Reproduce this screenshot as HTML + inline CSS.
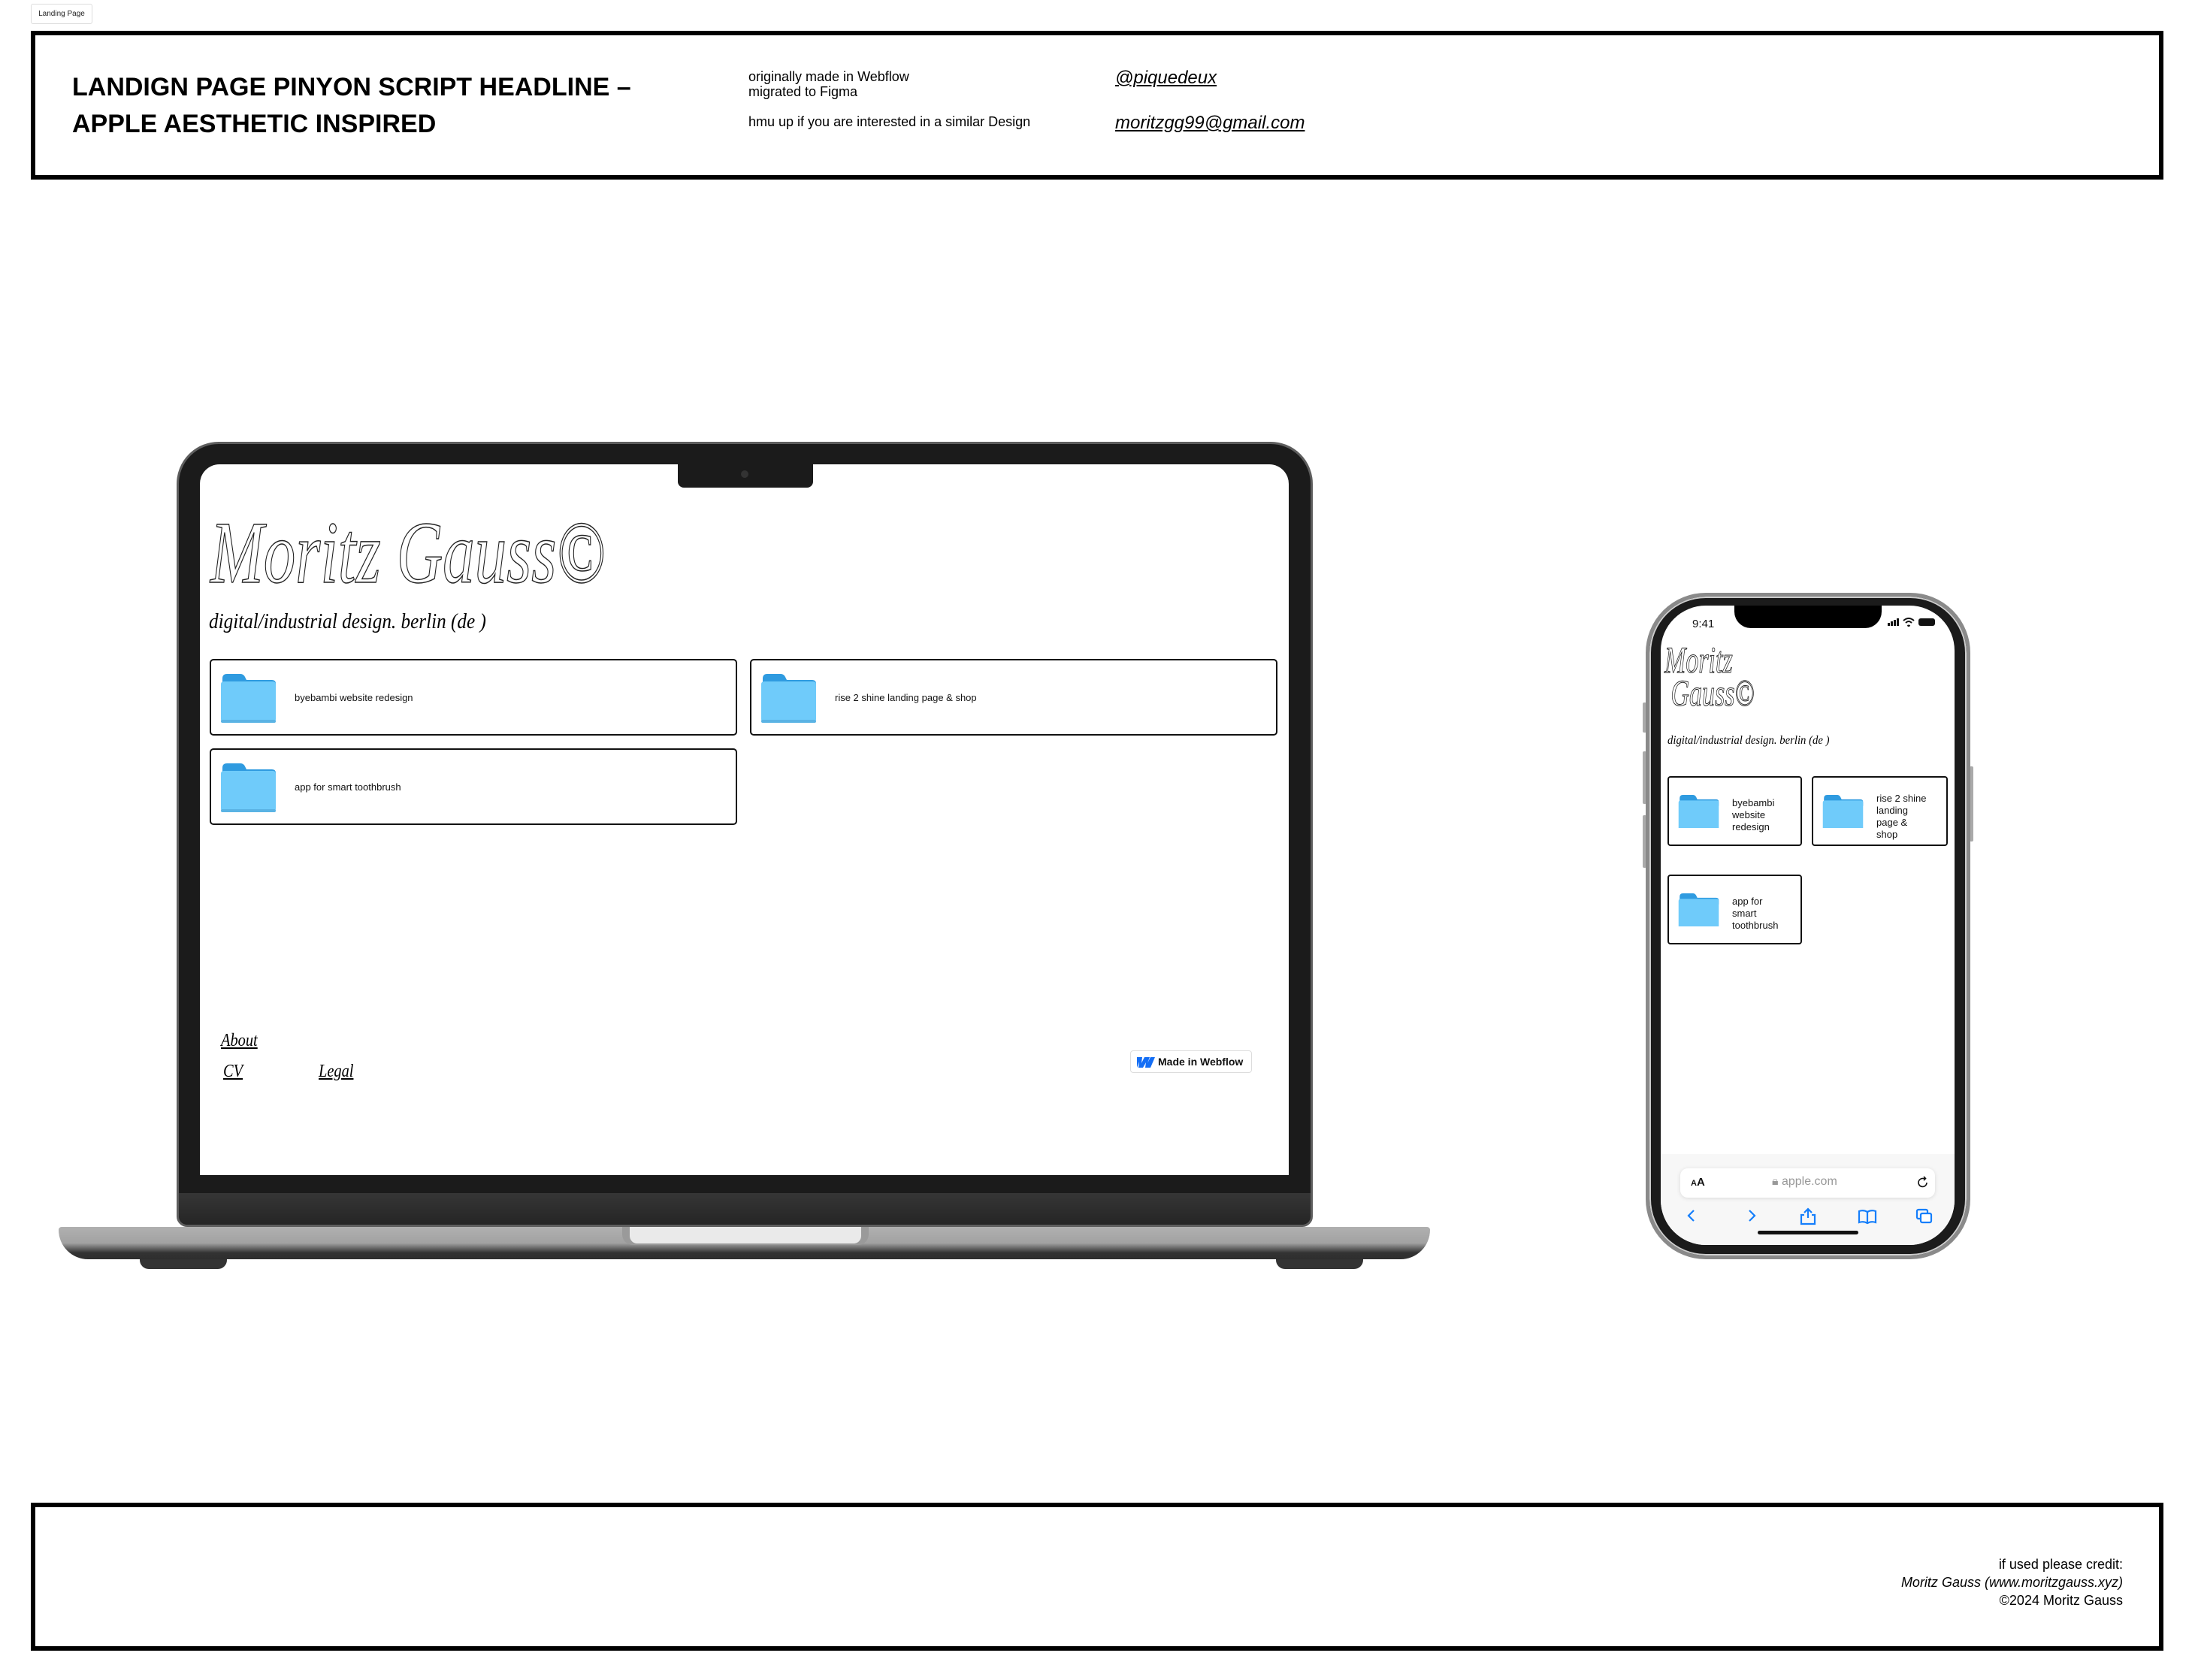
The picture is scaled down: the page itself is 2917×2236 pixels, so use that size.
<!DOCTYPE html>
<html><head><meta charset="utf-8"><style>
*{margin:0;padding:0;box-sizing:border-box}
body{width:2917px;height:2236px;background:#fff;position:relative;overflow:hidden;font-family:"Liberation Sans",sans-serif;color:#000}
.a{position:absolute}
.script{font-family:"Liberation Serif",serif;font-style:italic;white-space:nowrap;transform-origin:left top}
.card{position:absolute;border:2px solid #111;border-radius:5px;background:#fff}
.ct{position:absolute;font-size:13px;color:#111}
.pc{position:absolute;border:2px solid #111;border-radius:4px;background:#fff}
.pt{position:absolute;left:84px;font-size:13px;line-height:16px;color:#111}
</style></head><body>

<div class="a" style="left:41px;top:5px;width:82px;height:27px;border:1px solid #ddd;border-radius:3px;font-size:10px;line-height:25px;text-align:center;color:#222">Landing Page</div>

<div class="a" style="left:41px;top:41px;width:2838px;height:198px;border:6px solid #000"></div>
<div class="a" style="left:96px;top:92px;font-size:34px;font-weight:bold;line-height:49px">LANDIGN PAGE PINYON SCRIPT HEADLINE –<br>APPLE AESTHETIC INSPIRED</div>
<div class="a" style="left:996px;top:92px;font-size:18px;line-height:20px">originally made in Webflow<br>migrated to Figma</div>
<div class="a" style="left:996px;top:152px;font-size:18px">hmu up if you are interested in a similar Design</div>
<div class="a" style="left:1484px;top:90px;font-size:24px;font-style:italic;text-decoration:underline">@piquedeux</div>
<div class="a" style="left:1484px;top:150px;font-size:24px;font-style:italic;text-decoration:underline">moritzgg99@gmail.com</div>

<div class="a" style="left:41px;top:2000px;width:2838px;height:197px;border:6px solid #000"></div>
<div class="a" style="right:92px;top:2070px;font-size:18px;line-height:24px;text-align:right">if used please credit:<br><i>Moritz Gauss (www.moritzgauss.xyz)</i><br>©2024 Moritz Gauss</div>

<!-- LAPTOP -->
<div class="a" style="left:186px;top:1665px;width:116px;height:24px;background:#333;border-radius:0 0 12px 12px"></div>
<div class="a" style="left:1698px;top:1665px;width:116px;height:24px;background:#333;border-radius:0 0 12px 12px"></div>
<div class="a" style="left:78px;top:1633px;width:1825px;height:43px;border-radius:4px 4px 40px 40px;background:linear-gradient(#b0b0b0 0%,#a2a2a2 50%,#6a6a6a 65%,#333 80%,#2e2e2e 100%)"></div>
<div class="a" style="left:828px;top:1633px;width:328px;height:24px;background:#9a9a9a;border-radius:0 0 14px 14px"></div>
<div class="a" style="left:838px;top:1633px;width:308px;height:22px;background:#eaeaea;border-radius:0 0 10px 10px"></div>
<div class="a" style="left:235px;top:588px;width:1512px;height:1045px;background:#1b1b1b;border:3px solid #5e5e5e;border-radius:56px 56px 14px 14px"></div>
<div class="a" style="left:238px;top:1588px;width:1506px;height:42px;background:linear-gradient(#363636,#252525);border-radius:0 0 12px 12px"></div>
<div class="a" style="left:266px;top:618px;width:1449px;height:946px;background:#fff;border-radius:26px 26px 0 0;overflow:hidden">
  <div class="a" style="left:636px;top:0;width:180px;height:31px;background:#1b1b1b;border-radius:0 0 8px 8px"></div>
  <div class="a" style="left:720px;top:8px;width:10px;height:10px;border-radius:50%;background:#333"></div>
  <div class="a script" style="left:14px;top:50px;font-size:118px;color:#fff;-webkit-text-stroke:1.5px #222;transform:scaleX(0.72)">Moritz Gauss©</div>
  <div class="a script" style="left:12px;top:194px;font-size:28px;transform:scaleX(0.9)">digital/industrial design. berlin (de )</div>
  <div class="a script" style="left:28px;top:754px;font-size:24px;text-decoration:underline;transform:scaleX(0.85)">About</div>
  <div class="a script" style="left:31px;top:795px;font-size:24px;text-decoration:underline;transform:scaleX(0.85)">CV</div>
  <div class="a script" style="left:158px;top:795px;font-size:24px;text-decoration:underline;transform:scaleX(0.85)">Legal</div>
</div>
<svg width="0" height="0" style="position:absolute"><defs>
<g id="fold"><path d="M2 6 Q2 0 8 0 H26 Q30 0 32 4 L34 8 H68 Q73 8 73 13 V20 H2 Z" fill="#2f9be0"/><path d="M0 14 Q0 10 4 10 H69 Q73 10 73 14 V60 Q73 65 68 65 H5 Q0 65 0 60 Z" fill="#6fcbfa"/><rect x="0" y="61" width="73" height="4" rx="2" fill="#5ab3e4"/></g>
</defs></svg>
<div class="card" style="left:279px;top:877px;width:702px;height:102px"><svg class="a" style="left:13px;top:18px" width="73" height="65"><use href="#fold"/></svg><div class="ct" style="left:111px;top:42px">byebambi website redesign</div></div>
<div class="card" style="left:998px;top:877px;width:702px;height:102px"><svg class="a" style="left:13px;top:18px" width="73" height="65"><use href="#fold"/></svg><div class="ct" style="left:111px;top:42px">rise 2 shine landing page &amp; shop</div></div>
<div class="card" style="left:279px;top:996px;width:702px;height:102px"><svg class="a" style="left:13px;top:18px" width="73" height="65"><use href="#fold"/></svg><div class="ct" style="left:111px;top:42px">app for smart toothbrush</div></div>
<div class="a" style="left:1504px;top:1398px;width:162px;height:30px;border:1px solid #ddd;border-radius:4px;background:#fff;font-size:14px;font-weight:bold;line-height:28px;padding-left:36px;color:#111">Made in Webflow
<svg class="a" style="left:6px;top:7px" width="26" height="16"><path d="M2 1 H9 L8 9 L12 1 H19 L16 9 L20 1 H26 L20 15 H13 L14 8 L10 15 H4 L5 7 L2 15 Z" fill="#146ef5"/></svg></div>

<!-- PHONE -->
<div class="a" style="left:2186px;top:935px;width:5px;height:40px;background:#aaa;border-radius:2px"></div>
<div class="a" style="left:2186px;top:1000px;width:5px;height:70px;background:#aaa;border-radius:2px"></div>
<div class="a" style="left:2186px;top:1085px;width:5px;height:70px;background:#aaa;border-radius:2px"></div>
<div class="a" style="left:2621px;top:1020px;width:5px;height:100px;background:#aaa;border-radius:2px"></div>
<div class="a" style="left:2190px;top:789px;width:432px;height:887px;border-radius:80px;background:#1b1b1b;border:5px solid #8a8a8a;box-shadow:inset 0 0 0 2px #ccc"></div>
<div class="a" style="left:2210px;top:806px;width:391px;height:851px;border-radius:60px;background:#fff;overflow:hidden">
  <div class="a" style="left:98px;top:0;width:196px;height:30px;background:#000;border-radius:0 0 22px 22px"></div>
  <div class="a" style="left:42px;top:16px;font-size:15px;color:#111">9:41</div>
  <div class="a" style="left:302px;top:23px;width:3px;height:4px;background:#111"></div>
  <div class="a" style="left:306px;top:21px;width:3px;height:6px;background:#111"></div>
  <div class="a" style="left:310px;top:19px;width:3px;height:8px;background:#111"></div>
  <div class="a" style="left:314px;top:17px;width:3px;height:10px;background:#111"></div>
  <svg class="a" style="left:322px;top:16px" width="16" height="12"><path d="M1 4 Q8 -2 15 4 M4 7 Q8 3 12 7 M6.5 10 L8 11.5 L9.5 10" stroke="#111" stroke-width="2" fill="none"/></svg>
  <div class="a" style="left:343px;top:17px;width:22px;height:10px;border-radius:3px;background:#111"></div>
  <div class="a script" style="left:5px;top:50px;font-size:50px;line-height:44px;color:#fff;-webkit-text-stroke:1px #222;transform:scaleX(0.68)">Moritz<br>&nbsp;Gauss©</div>
  <div class="a script" style="left:9px;top:171px;font-size:16px;transform:scaleX(0.92)">digital/industrial design. berlin (de )</div>
  <div class="pc" style="left:9px;top:227px;width:179px;height:93px"><svg class="a" style="left:12px;top:23px" width="55" height="44" viewBox="0 0 73 60"><use href="#fold"/></svg><div class="pt" style="top:26px">byebambi<br>website<br>redesign</div></div>
  <div class="pc" style="left:201px;top:227px;width:181px;height:93px"><svg class="a" style="left:12px;top:23px" width="55" height="44" viewBox="0 0 73 60"><use href="#fold"/></svg><div class="pt" style="top:20px">rise 2 shine<br>landing<br>page &amp;<br>shop</div></div>
  <div class="pc" style="left:9px;top:358px;width:179px;height:93px"><svg class="a" style="left:12px;top:23px" width="55" height="44" viewBox="0 0 73 60"><use href="#fold"/></svg><div class="pt" style="top:26px">app for<br>smart<br>toothbrush</div></div>
  <div class="a" style="left:0;top:730px;width:391px;height:122px;background:#f7f7f7"></div>
  <div class="a" style="left:26px;top:749px;width:339px;height:39px;background:#fff;border-radius:10px;box-shadow:0 1px 6px rgba(0,0,0,.12)"></div>
  <div class="a" style="left:40px;top:759px;font-size:15px;font-weight:bold;color:#111"><span style="font-size:11px">A</span>A</div>
  <div class="a" style="left:148px;top:758px;font-size:16px;color:#999">🔒︎ apple.com</div>
  <svg class="a" style="left:340px;top:759px" width="18" height="18"><path d="M14 9 A5.5 5.5 0 1 1 9 3.5 H12 M10 1 L12.5 3.5 L10 6" stroke="#111" stroke-width="1.6" fill="none"/></svg>
  <svg class="a" style="left:28px;top:800px" width="360" height="26" fill="none" stroke="#147efb" stroke-width="2.2">
    <path d="M16 5 L9 12 L16 19"/>
    <path d="M90 5 L97 12 L90 19"/>
    <path d="M163 8 L168 3 L173 8 M168 3 V15 M163 11 H159 V23 H177 V11 H173"/>
    <path d="M236 6 Q242 4 247 7 Q252 4 258 6 V21 Q252 19 247 22 Q242 19 236 21 Z M247 7 V22"/>
    <rect x="313" y="4" width="14" height="12" rx="2"/><rect x="318" y="9" width="14" height="12" rx="2" fill="#fff"/>
  </svg>
  <div class="a" style="left:129px;top:832px;width:134px;height:5px;border-radius:3px;background:#111"></div>
</div>
</body></html>
